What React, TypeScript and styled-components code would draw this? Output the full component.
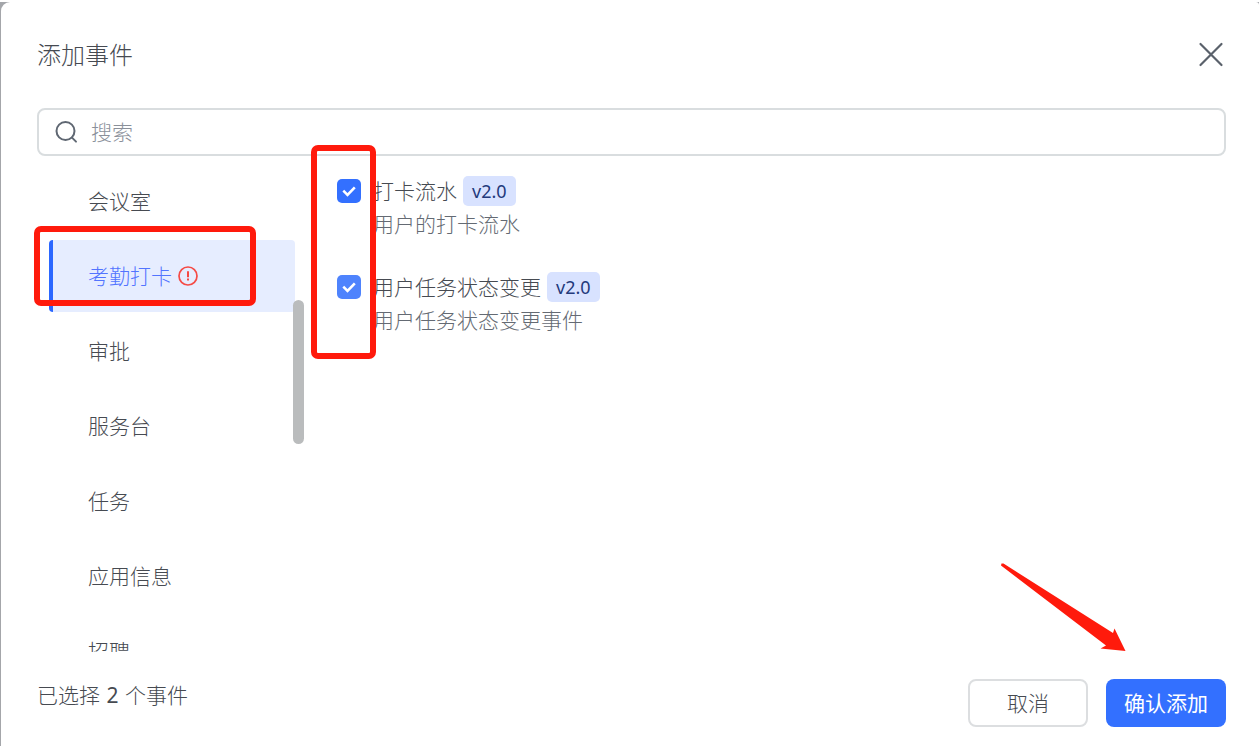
import React, { useState } from "react";
import styled, { createGlobalStyle } from "styled-components";

const GlobalStyle = createGlobalStyle`
  *, *::before, *::after { box-sizing: border-box; }
  body {
    margin: 0;
    background: #a4a6aa;
    font-family: "Noto Sans", "Noto Sans CJK SC", sans-serif;
    font-weight: 300;
    font-size: 21px;
    line-height: 30px;
    color: #464a51;
  }
  button, input { font: inherit; color: inherit; }
`;

const Page = styled.div`
  height: 100vh;
  min-height: 480px;
  padding-left: 1px;
  border-top: 2px solid #fff;
`;

const Dialog = styled.section`
  position: relative;
  display: flex;
  flex-direction: column;
  height: 100%;
  background: #fff;
  border-radius: 9px 3px 0 0;
`;

const Header = styled.header`
  display: flex;
  align-items: center;
  justify-content: space-between;
  padding: 35px 35px 0 36px;
`;

const Title = styled.h1`
  margin: 0;
  font-size: 24px;
  line-height: 36px;
  font-weight: 300;
`;

const CloseButton = styled.button`
  display: flex;
  padding: 0;
  border: 0;
  background: none;
  color: #5a616b;
`;

const SearchBox = styled.label`
  display: flex;
  align-items: center;
  gap: 12px;
  height: 48px;
  margin: 35px 33px 0 36px;
  padding: 0 16px;
  border: 2px solid #d9dddf;
  border-radius: 8px;
  color: #5f6772;
`;

const SearchInput = styled.input`
  flex: 1;
  min-width: 0;
  padding: 0;
  border: 0;
  outline: 0;
  background: none;
  &::placeholder { color: #8a909a; opacity: 1; }
`;

const Body = styled.div`
  display: flex;
  flex: 1;
  min-height: 0;
  padding-top: 9px;
`;

const Sidebar = styled.nav`
  position: relative;
  width: 303px;
  padding-left: 48px;
  padding-right: 9px;
`;

const CategoryList = styled.ul`
  display: flex;
  flex-direction: column;
  gap: 3px;
  height: 100%;
  margin: 0;
  padding: 0;
  overflow: hidden;
  list-style: none;
`;

const CategoryButton = styled.button<{ $active: boolean }>`
  display: flex;
  align-items: center;
  gap: 6px;
  width: 100%;
  height: 72px;
  padding: 0 0 0 35px;
  border: 0;
  border-left: 4px solid ${(p) => (p.$active ? "#2b67ff" : "transparent")};
  border-radius: 4px;
  background: ${(p) => (p.$active ? "#e6edff" : "transparent")};
  color: ${(p) => (p.$active ? "#5274ff" : "inherit")};
  text-align: left;
`;

const ScrollThumb = styled.div`
  position: absolute;
  top: 135px;
  right: 0;
  width: 11px;
  height: 144px;
  border-radius: 6px;
  background: #babcbd;
`;

const EventList = styled.ul`
  display: flex;
  flex: 1;
  flex-direction: column;
  gap: 33px;
  margin: 0;
  padding: 11px 33px 0 33px;
  list-style: none;
`;

const EventItem = styled.li`
  display: flex;
  gap: 12px;
`;

const CheckWrap = styled.span`
  display: grid;
  width: 24px;
  height: 24px;
  margin-top: 3px;
  > * { grid-area: 1 / 1; }
  svg { pointer-events: none; }
`;

const Checkbox = styled.input<{ $soft: boolean }>`
  appearance: none;
  width: 24px;
  height: 24px;
  margin: 0;
  border: 2px solid #c9cdd4;
  border-radius: 5px;
  background: #fff;
  &:checked {
    border: 0;
    background: ${(p) => (p.$soft ? "#4e83fd" : "#3370ff")};
  }
`;

const EventText = styled.div`
  display: flex;
  flex-direction: column;
  gap: 3px;
`;

const EventName = styled.label`
  display: flex;
  align-items: center;
  gap: 6px;
`;

const Version = styled.span`
  height: 30px;
  padding: 0 9px;
  border-radius: 5px;
  background: #d8e2ff;
  color: #23397c;
  font-size: 18px;
  font-weight: 400;
`;

const Description = styled.p`
  margin: 0;
  color: #646a73;
`;

const Footer = styled.footer`
  display: flex;
  align-items: flex-start;
  justify-content: space-between;
  padding: 27px 33px 19px 36px;
  line-height: 32px;
`;

const Count = styled.b`
  margin: 0 1px;
  font-weight: 400;
`;

const Actions = styled.div`
  display: flex;
  gap: 18px;
`;

const ActionButton = styled.button<{ $primary?: boolean }>`
  width: 120px;
  height: 48px;
  padding: 0;
  border: ${(p) => (p.$primary ? "0" : "2px solid #dcdee0")};
  border-radius: 8px;
  background: ${(p) => (p.$primary ? "#3370ff" : "#fff")};
  color: ${(p) => (p.$primary ? "#fff" : "#464a51")};
  font-weight: ${(p) => (p.$primary ? 400 : 300)};
`;

const Marker = styled.div<{ $x: number; $y: number; $w: number; $h: number }>`
  position: absolute;
  left: ${(p) => p.$x}px;
  top: ${(p) => p.$y}px;
  width: ${(p) => p.$w}px;
  height: ${(p) => p.$h}px;
  border: 6px solid #ff1a0c;
  border-radius: 7px;
  pointer-events: none;
`;

const Arrow = styled.svg`
  position: absolute;
  right: 133px;
  bottom: 93px;
  pointer-events: none;
`;

const categories = ["会议室", "考勤打卡", "审批", "服务台", "任务", "应用信息", "招聘"];

const events = [
  { id: "flow", name: "打卡流水", version: "v2.0", text: "用户的打卡流水" },
  { id: "task", name: "用户任务状态变更", version: "v2.0", text: "用户任务状态变更事件" },
];

function AlertIcon() {
  return (
    <svg width="20" height="20" viewBox="0 0 20 20" fill="none" stroke="#f54a45">
      <circle cx="10" cy="10" r="9" strokeWidth="1.7" />
      <path d="M10 5.2v6" strokeWidth="2" />
      <path d="M10 12.6v2" strokeWidth="2" />
    </svg>
  );
}

export default function App() {
  const [active, setActive] = useState("考勤打卡");
  const [selected, setSelected] = useState(["flow", "task"]);
  const toggle = (id: string) =>
    setSelected((s) => (s.includes(id) ? s.filter((v) => v !== id) : [...s, id]));

  return (
    <>
      <GlobalStyle />
      <Page>
        <Dialog role="dialog" aria-labelledby="dialog-title">
          <Header>
            <Title id="dialog-title">添加事件</Title>
            <CloseButton aria-label="关闭">
              <svg width="26" height="26" viewBox="0 0 26 26" fill="none" stroke="currentColor" strokeWidth="2.2" strokeLinecap="round">
                <path d="M2.5 2l21 21M23.5 2l-21 21" />
              </svg>
            </CloseButton>
          </Header>
          <SearchBox>
            <svg width="24" height="24" viewBox="0 0 24 24" fill="none" stroke="currentColor" strokeWidth="2" strokeLinecap="round">
              <circle cx="10.500" cy="11" r="9" />
              <path d="M17 17.600l4 4" />
            </svg>
            <SearchInput type="text" placeholder="搜索" aria-label="搜索" />
          </SearchBox>
          <Body>
            <Sidebar>
              <CategoryList>
                {categories.map((c) => (
                  <li key={c}>
                    <CategoryButton $active={c === active} onClick={() => setActive(c)}>
                      {c}
                      {c === "考勤打卡" && <AlertIcon />}
                    </CategoryButton>
                  </li>
                ))}
              </CategoryList>
              <ScrollThumb />
            </Sidebar>
            <EventList>
              {events.map((e, i) => (
                <EventItem key={e.id}>
                  <CheckWrap>
                    <Checkbox
                      type="checkbox"
                      id={e.id}
                      $soft={i === 1}
                      checked={selected.includes(e.id)}
                      onChange={() => toggle(e.id)}
                    />
                    <svg width="24" height="24" viewBox="0 0 24 24" fill="none" stroke="#fff" strokeWidth="2.6">
                      <path d="M6.3 11.6l4.2 4.2 7.3-7.4" />
                    </svg>
                  </CheckWrap>
                  <EventText>
                    <EventName htmlFor={e.id}>
                      {e.name}
                      <Version>{e.version}</Version>
                    </EventName>
                    <Description>{e.text}</Description>
                  </EventText>
                </EventItem>
              ))}
            </EventList>
          </Body>
          <Footer>
            <span>
              已选择 <Count>{selected.length}</Count> 个事件
            </span>
            <Actions>
              <ActionButton>取消</ActionButton>
              <ActionButton $primary>确认添加</ActionButton>
            </Actions>
          </Footer>
          <Marker $x={33} $y={224} $w={222} $h={80} />
          <Marker $x={310} $y={143} $w={65} $h={214} />
          <Arrow width="126" height="90" viewBox="0 0 126 90" fill="#ff1a0c">
            <path d="M1.5 0.5L3.5 0.5L113 70L114.500 65.500L125.500 88L100.500 85.500L106 82.500L1 2.500Z" />
          </Arrow>
        </Dialog>
      </Page>
    </>
  );
}
